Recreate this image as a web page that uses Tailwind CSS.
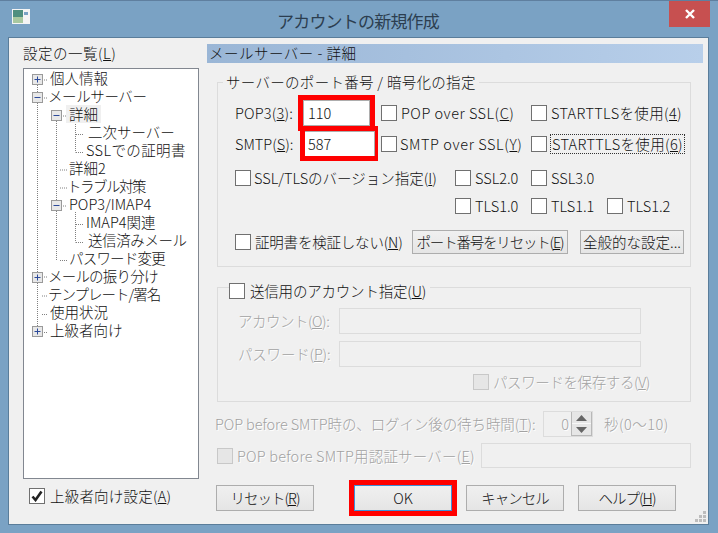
<!DOCTYPE html>
<html lang="ja">

<head>
    <meta charset="UTF-8" />
    <title>アカウントの新規作成</title>
    <script src="https://cdn.jsdelivr.net/npm/@tailwindcss/browser@4"></script>
</head>

<body class="m-0 bg-[#7aa2c4]">
    <div class="relative w-[718px] h-[533px] overflow-hidden bg-[#7aa2c4] border-t border-[#5f7f9f] text-[14.5px] leading-[18px] text-[#111] font-light whitespace-nowrap font-['Noto_Sans_CJK_JP','Noto_Sans',sans-serif]">

        <!-- title bar -->
        <div class="relative flex items-center h-[36px] pl-[12px]">
            <svg width="18" height="16" viewBox="0 0 18 16" class="mt-[-4px]">
                <rect x="0" y="0" width="18" height="15" fill="#f4f4f4" />
                <rect x="1" y="1" width="10" height="13" fill="#4f8f7f" />
                <rect x="1" y="8" width="10" height="6" fill="#a8c8a0" />
                <rect x="12" y="3" width="4" height="3" fill="#7aa2c4" />
            </svg>
            <div class="flex-1 text-center text-[17px] font-normal text-[#2c3e50] pr-[32px] pt-[3px] tracking-[-0.8px]">アカウントの新規作成</div>
            <div class="absolute right-[8px] top-0 flex items-center justify-center w-[41px] h-[26px] bg-[#c75050]">
                <svg width="12" height="12" viewBox="0 0 12 12"><path d="M2 2 L10 10 M10 2 L2 10" stroke="#fff" stroke-width="2.4" /></svg>
            </div>
        </div>

        <!-- client area -->
        <div class="flex w-[701px] h-[488px] ml-[8px] border border-[#5a7d9a] bg-[#f0f0f0]">

            <!-- left column -->
            <div class="w-[190px] pl-[14px] shrink-0">
                <div class="h-[30px] pt-[6px] tracking-[0.5px]">設定の一覧(<u>L</u>)</div>
                <div class="relative w-[176px] h-[411px] border border-[#828790] bg-white">
                    <svg width="174" height="280" class="absolute left-0 top-0" fill="none">
                        <g stroke="#808080" stroke-dasharray="1 1">
                            <path d="M13.500 16V264M18 11H24M18 29H24M18 208H24M18 227H24M18 245.500H24M18 263.500H24" />
                            <path d="M32.500 52V192M37 47H43M36 101H43M36 119H43M37 137H43M36 191.500H43" />
                            <path d="M51.500 53V83.500M52 65.500H60M52 83.500H60M51.500 143V173.500M52 155.500H60M52 173.500H60" />
                        </g>
                        <g fill="#e8e8e8" stroke="#9a9a9a">
                            <rect x="8.500" y="5.500" width="10" height="10" />
                            <rect x="8.500" y="23.500" width="10" height="10" />
                            <rect x="27.500" y="41.500" width="10" height="10" />
                            <rect x="27.500" y="131.500" width="10" height="10" />
                            <rect x="8.500" y="203.500" width="10" height="10" />
                            <rect x="8.500" y="257.500" width="10" height="10" />
                        </g>
                        <path d="M10.500 10.500H16.500M13.500 7.500V13.500M10.500 28.500H16.500M29.500 46.500H35.500M29.500 136.500H35.500M10.500 208.500H16.500M13.500 205.500V211.500M10.500 262.500H16.500M13.500 259.500V265.500" stroke="#2c4a9a" />
                    </svg>
                    <div class="relative">
                        <div class="h-[18px] pl-[26px]">個人情報</div>
                        <div class="h-[18px] pl-[24px] tracking-[-0.4px]">メールサーバー</div>
                        <div class="h-[18px] pl-[42px]"><span class="inline-block h-[18px] bg-[#f0f0f0] px-[3px]">詳細</span></div>
                        <div class="h-[18px] pl-[64px]">二次サーバー</div>
                        <div class="h-[18px] pl-[62px] tracking-[0.4px]">SSLでの証明書</div>
                        <div class="h-[18px] pl-[45px]">詳細2</div>
                        <div class="h-[18px] pl-[43px] tracking-[-1.5px]">トラブル対策</div>
                        <div class="h-[18px] pl-[45px]">POP3/IMAP4</div>
                        <div class="h-[18px] pl-[62px]">IMAP4関連</div>
                        <div class="h-[18px] pl-[64px] tracking-[-0.4px]">送信済みメール</div>
                        <div class="h-[18px] pl-[45px] tracking-[-0.8px]">パスワード変更</div>
                        <div class="h-[18px] pl-[24px] tracking-[-0.8px]">メールの振り分け</div>
                        <div class="h-[18px] pl-[24px] tracking-[-1px]">テンプレート/署名</div>
                        <div class="h-[18px] pl-[26px]">使用状況</div>
                        <div class="h-[18px] pl-[26px]">上級者向け</div>
                    </div>
                </div>
                <div class="flex items-center gap-[5px] ml-[6px] mt-[8px] tracking-[0.2px]">
                    <span class="flex items-center justify-center shrink-0 w-4 h-4 border border-[#707070] bg-white">
                        <svg width="12" height="12" viewBox="0 0 12 12" fill="none"><path d="M1.500 6.500 L4.500 10 L10.500 1.500" stroke="#222" stroke-width="2.600" /></svg>
                    </span>
                    <span>上級者向け設定(<u>A</u>)</span>
                </div>
            </div>

            <!-- right column -->
            <div class="ml-[8px] pt-[6px] w-[496px]">
                <div class="h-[19px] pl-[2px] leading-[18px] bg-gradient-to-r from-[#9ab6d6] to-[#b8cfea] tracking-[0.5px]">メールサーバー - 詳細</div>

                <!-- port group -->
                <div class="relative ml-[10px] mt-[19px] w-[474px] h-[185px] border border-[#dcdcdc] pt-[17px]">
                    <div class="absolute left-[5px] top-[-10px] bg-[#f0f0f0] px-[3px] tracking-[0.3px]">サーバーのポート番号 / 暗号化の指定</div>
                    <div class="flex items-center h-[26px] pl-[17px]">
                        <div class="w-[68px] tracking-[0.2px]">POP3(<u>3</u>):</div>
                        <div class="w-[67px] h-[26px] border border-[#adadad] bg-white pl-[4px] leading-[24px]">110</div>
                        <div class="flex items-center gap-[4px] w-[150px] ml-[11px] tracking-[0.5px]"><span class="shrink-0 w-4 h-4 border border-[#707070] bg-white"></span><span>POP over SSL(<u>C</u>)</span></div>
                        <div class="flex items-center gap-[4px] tracking-[0.35px]"><span class="shrink-0 w-4 h-4 border border-[#707070] bg-white"></span><span>STARTTLSを使用(<u>4</u>)</span></div>
                    </div>
                    <div class="flex items-center h-[26px] pl-[17px] mt-[5px]">
                        <div class="w-[69px]">SMTP(<u>S</u>):</div>
                        <div class="w-[71px] h-[26px] border border-[#adadad] bg-white pl-[3px] leading-[24px]">587</div>
                        <div class="flex items-center gap-[3px] w-[150px] ml-[6px] tracking-[0.6px]"><span class="shrink-0 w-4 h-4 border border-[#707070] bg-white"></span><span>SMTP over SSL(<u>Y</u>)</span></div>
                        <div class="flex items-center gap-[3px] tracking-[0.35px]"><span class="shrink-0 w-4 h-4 border border-[#707070] bg-white"></span><span class="border border-dotted border-[#333] px-[1px]">STARTTLSを使用(<u>6</u>)</span></div>
                    </div>
                    <div class="flex items-center h-[16px] pl-[17px] mt-[13px]">
                        <div class="flex items-center gap-[3px] w-[220px]"><span class="shrink-0 w-4 h-4 border border-[#707070] bg-white"></span><span>SSL/TLSのバージョン指定(<u>I</u>)</span></div>
                        <div class="flex items-center gap-[4px] w-[76px]"><span class="shrink-0 w-4 h-4 border border-[#707070] bg-white"></span>SSL2.0</div>
                        <div class="flex items-center gap-[4px]"><span class="shrink-0 w-4 h-4 border border-[#707070] bg-white"></span>SSL3.0</div>
                    </div>
                    <div class="flex items-center h-[16px] pl-[237px] mt-[12px]">
                        <div class="flex items-center gap-[4px] w-[76px]"><span class="shrink-0 w-4 h-4 border border-[#707070] bg-white"></span>TLS1.0</div>
                        <div class="flex items-center gap-[4px] w-[76px]"><span class="shrink-0 w-4 h-4 border border-[#707070] bg-white"></span>TLS1.1</div>
                        <div class="flex items-center gap-[4px]"><span class="shrink-0 w-4 h-4 border border-[#707070] bg-white"></span>TLS1.2</div>
                    </div>
                    <div class="flex items-center h-[24px] pl-[17px] mt-[16px]">
                        <div class="flex items-center gap-[4px] w-[177px] tracking-[-0.2px]"><span class="shrink-0 w-4 h-4 border border-[#707070] bg-white"></span><span>証明書を検証しない(<u>N</u>)</span></div>
                        <div class="w-[156px] h-[24px] border border-[#adadad] bg-gradient-to-b from-[#f0f0f0] to-[#e5e5e5] text-center leading-[21px] tracking-[-1.2px]">ポート番号をリセット(<u>E</u>)</div>
                        <div class="w-[104px] h-[24px] ml-[12px] border border-[#adadad] bg-gradient-to-b from-[#f0f0f0] to-[#e5e5e5] text-center leading-[21px]">全般的な設定...</div>
                    </div>
                </div>

                <!-- send account group -->
                <div class="relative ml-[10px] mt-[20px] w-[474px] h-[115px] border border-[#dcdcdc] pt-[20px] text-[#a2a2a2] [text-shadow:1px_1px_0_#fff]">
                    <div class="absolute left-[11px] top-[-6px] flex items-center gap-[5px] bg-[#f0f0f0] pr-[4px] text-[#111] [text-shadow:none] tracking-[-0.2px]"><span class="shrink-0 w-4 h-4 border border-[#707070] bg-white"></span><span>送信用のアカウント指定(<u>U</u>)</span></div>
                    <div class="flex items-center h-[26px] pl-[20px]">
                        <div class="w-[101px] tracking-[-0.5px]">アカウント(<u>O</u>):</div>
                        <div class="w-[302px] h-[26px] border border-[#dcdcdc]"></div>
                    </div>
                    <div class="flex items-center h-[26px] pl-[20px] mt-[7px]">
                        <div class="w-[101px] tracking-[-0.2px]">パスワード(<u>P</u>):</div>
                        <div class="w-[302px] h-[26px] border border-[#dcdcdc]"></div>
                    </div>
                    <div class="flex items-center gap-[4px] h-[16px] pl-[255px] mt-[7px] tracking-[-0.4px]"><span class="shrink-0 w-4 h-4 border border-[#c8c8c8] bg-[#e6e6e6]"></span><span>パスワードを保存する(<u>V</u>)</span></div>
                </div>

                <!-- pop before smtp -->
                <div class="flex items-center h-[26px] ml-[8px] mt-[9px] text-[#a2a2a2] [text-shadow:1px_1px_0_#fff]">
                    <div class="shrink-0 w-[328px] tracking-[-0.1px]">POP before SMTP時の、ログイン後の待ち時間(<u>T</u>):</div>
                    <div class="flex shrink-0 w-[50px] h-[26px] border border-[#dcdcdc]">
                        <span class="flex-1 text-right pr-[2px] leading-[24px]">0</span>
                        <span class="flex flex-col shrink-0 w-[21px] h-[24px] border-l border-b border-r border-[#b8b8b8]">
                            <span class="flex flex-1 items-center justify-center bg-[#e6e6e6] border-b border-[#f8f8f8]"><svg width="11" height="6"><path d="M5.500 0 L11 6 H0Z" fill="#666" /></svg></span>
                            <span class="flex flex-1 items-center justify-center bg-[#e6e6e6]"><svg width="11" height="6"><path d="M0 0 H11 L5.500 6Z" fill="#666" /></svg></span>
                        </span>
                    </div>
                    <div class="ml-[11px] tracking-[0.5px]">秒(0〜10)</div>
                </div>
                <div class="flex items-center h-[25px] ml-[10px] mt-[6px] text-[#a2a2a2] [text-shadow:1px_1px_0_#fff]">
                    <div class="flex items-center gap-[4px] shrink-0 w-[264px] tracking-[0.2px]"><span class="shrink-0 w-4 h-4 border border-[#c8c8c8] bg-[#e6e6e6]"></span><span>POP before SMTP用認証サーバー(<u>E</u>)</span></div>
                    <div class="w-[210px] h-[25px] border border-[#dcdcdc]"></div>
                </div>

                <!-- dialog buttons -->
                <div class="flex h-[26px] ml-[9px] mt-[17px] gap-[14px]">
                    <div class="w-[98px] mr-[26px] border border-[#adadad] bg-gradient-to-b from-[#f0f0f0] to-[#e5e5e5] text-center leading-[23px] tracking-[-1px]">リセット(<u>R</u>)</div>
                    <div class="w-[98px] border border-[#3f8fd8] bg-gradient-to-b from-[#f0f0f0] to-[#e5e5e5] text-center leading-[23px]">OK</div>
                    <div class="w-[98px] border border-[#adadad] bg-gradient-to-b from-[#f0f0f0] to-[#e5e5e5] text-center leading-[23px] tracking-[-1px]">キャンセル</div>
                    <div class="w-[98px] border border-[#adadad] bg-gradient-to-b from-[#f0f0f0] to-[#e5e5e5] text-center leading-[23px] tracking-[-1px]">ヘルプ(<u>H</u>)</div>
                </div>
            </div>
        </div>

        <!-- resize grip -->
        <svg width="12" height="12" class="absolute left-[695px] top-[510px]" fill="#bdbdbd">
            <rect x="8" y="0" width="3" height="3" /><rect x="4" y="4" width="3" height="3" /><rect x="8" y="4" width="3" height="3" />
            <rect x="0" y="8" width="3" height="3" /><rect x="4" y="8" width="3" height="3" /><rect x="8" y="8" width="3" height="3" />
        </svg>

        <!-- red annotation boxes -->
        <div class="absolute left-[298px] top-[94px] w-[77px] h-[36px] border-[5px] border-[#f00]"></div>
        <div class="absolute left-[300px] top-[125px] w-[78px] h-[35px] border-[5px] border-r-[3px] border-[#f00]"></div>
        <div class="absolute left-[349px] top-[479px] w-[108px] h-[36px] border-[5px] border-[#f00]"></div>
    </div>
</body>

</html>
